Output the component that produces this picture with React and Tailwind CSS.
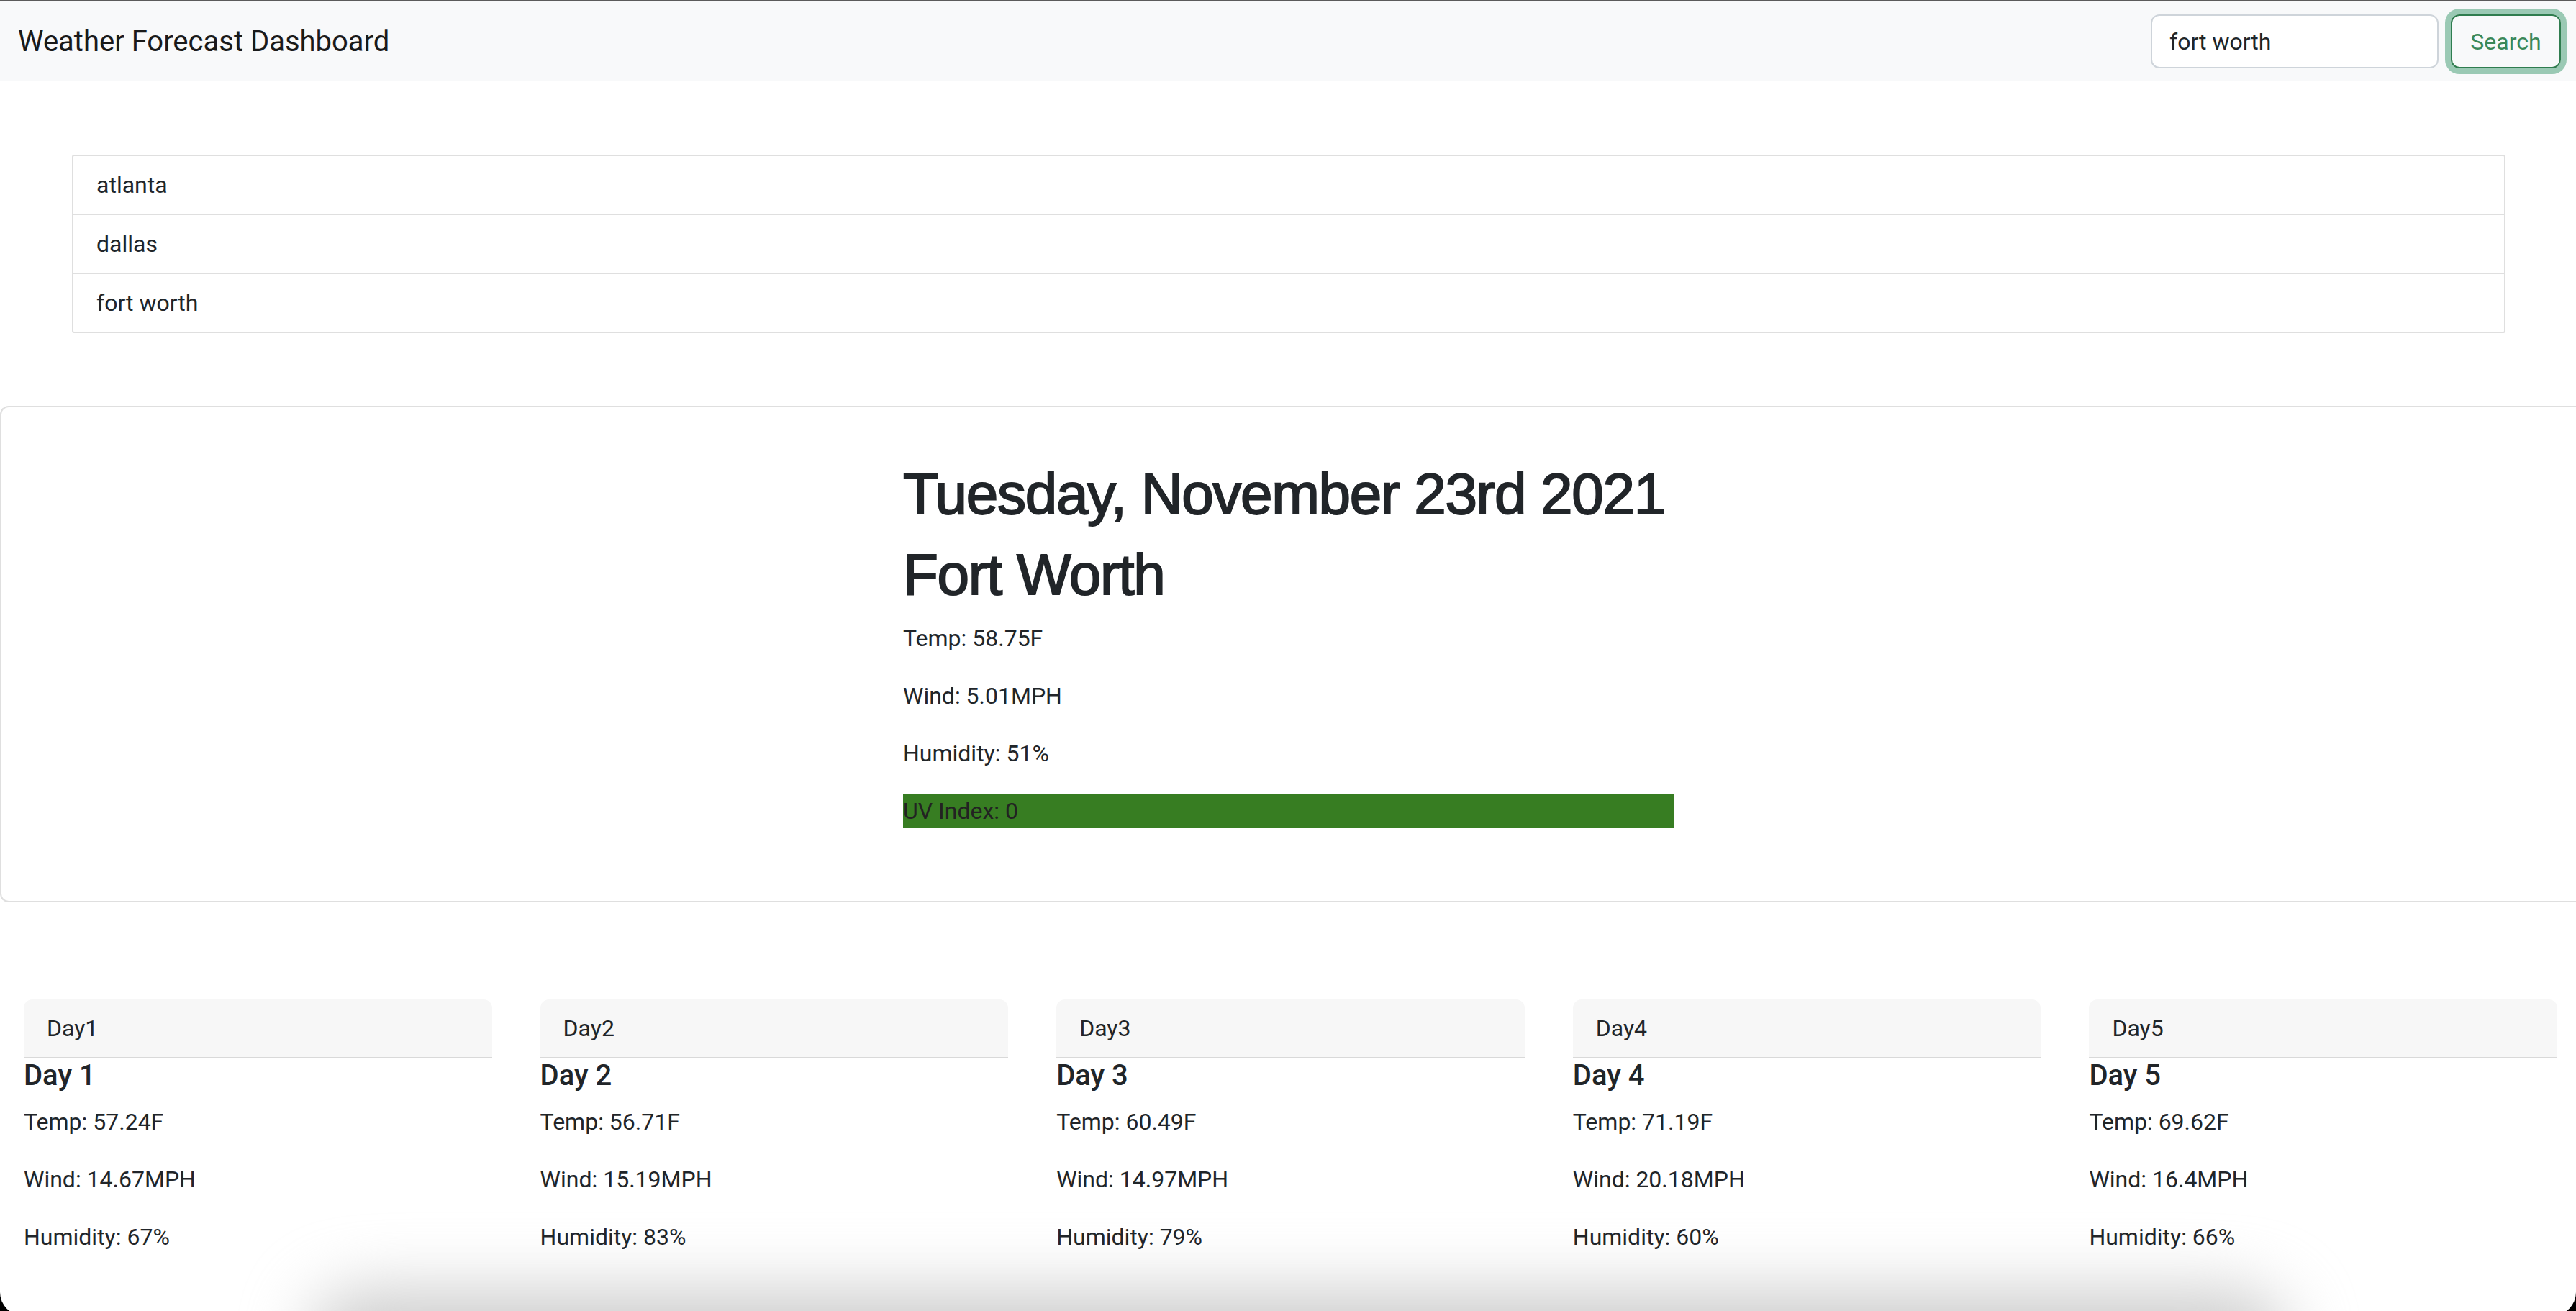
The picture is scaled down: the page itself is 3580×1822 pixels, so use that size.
import React from 'react';

const history = ["atlanta", "dallas", "fort worth"];

const forecast = [
  { label: "Day1", title: "Day 1", temp: "57.24F", wind: "14.67MPH", humidity: "67%" },
  { label: "Day2", title: "Day 2", temp: "56.71F", wind: "15.19MPH", humidity: "83%" },
  { label: "Day3", title: "Day 3", temp: "60.49F", wind: "14.97MPH", humidity: "79%" },
  { label: "Day4", title: "Day 4", temp: "71.19F", wind: "20.18MPH", humidity: "60%" },
  { label: "Day5", title: "Day 5", temp: "69.62F", wind: "16.4MPH", humidity: "66%" },
];

function Navbar() {
  return (
    <nav className="h-[113px] border-t-2 border-[#5b5b5b] bg-[#f8f9fa] flex items-center justify-between pl-[25px] pr-[21px]">
      <span className="text-[40px] leading-[60px] text-[#1a1a1a]">Weather Forecast Dashboard</span>
      <div className="flex items-center gap-[17px]">
        <input
          type="text"
          defaultValue="fort worth"
          className="w-[400px] h-[75px] bg-white border-2 border-[#ced4da] rounded-[12px] px-[24px] text-[32px] text-[#212529] outline-none"
        />
        <button className="w-[153px] h-[75px] border-2 border-[#2f7d4f] rounded-[12px] text-[32px] text-[#3a8858] shadow-[0_0_0_8px_rgba(25,135,84,0.42)]">
          Search
        </button>
      </div>
    </nav>
  );
}

function CurrentWeather() {
  // Arial-width face, thickened a little to read as medium weight
  const heading = "text-[80px] leading-[96px] mb-[16px] whitespace-nowrap tracking-[-1.3px] text-[#212529] font-[family-name:'Liberation_Sans',Arial,sans-serif] [-webkit-text-stroke-width:2px] [-webkit-text-stroke-color:#212529]";
  return (
    <div className="mt-[101px] border-2 border-r-0 border-[#dfdfdf] rounded-l-[12px] pt-[73px] pb-[101px]">
      <div className="mx-auto w-[1072px]">
        <h1 className={heading}>Tuesday, November 23rd 2021</h1>
        <h1 className={heading}>Fort Worth</h1>
        <p className="leading-[48px] mb-[32px]">Temp: 58.75F</p>
        <p className="leading-[48px] mb-[32px]">Wind: 5.01MPH</p>
        <p className="leading-[48px] mb-[32px]">Humidity: 51%</p>
        <p className="leading-[48px] bg-[#377d22] text-[#222]">UV Index: 0</p>
      </div>
    </div>
  );
}

function ForecastCard({ day }) {
  return (
    <div>
      <div className="bg-[#f7f7f7] border-b-2 border-[#d9d9d9] rounded-t-[12px] px-[32px] py-[16px] leading-[48px]">
        {day.label}
      </div>
      <h5 className="text-[40px] leading-[48px] font-medium mb-[16px]">{day.title}</h5>
      <p className="leading-[48px] mb-[32px]">Temp: {day.temp}</p>
      <p className="leading-[48px] mb-[32px]">Wind: {day.wind}</p>
      <p className="leading-[48px]">Humidity: {day.humidity}</p>
    </div>
  );
}

export default function App() {
  return (
    <div className="h-[1822px] overflow-hidden bg-black">
      <div className="relative h-[1828px] overflow-hidden rounded-b-[32px] bg-white text-[32px] text-[#212529] font-[family-name:Roboto,'Liberation_Sans',sans-serif]">
        {/* window shadow at the bottom edge */}
        <div className="absolute left-[430px] right-[400px] bottom-[-115px] h-[150px] rounded-full bg-[#cdcdcd] blur-[45px] pointer-events-none" />

        <div className="relative z-10">
          <Navbar />

          <div className="mt-[102px] ml-[100px] mr-[98px] border-2 border-[#dfdfdf] rounded-[3px]">
            {history.map((city, i) => (
              <div
                key={city}
                className={`px-[32px] py-[16px] leading-[48px] ${i > 0 ? "border-t-2 border-[#dfdfdf]" : ""}`}
              >
                {city}
              </div>
            ))}
          </div>

          <CurrentWeather />

          <div className="mt-[135px] pl-[33px] pr-[26px] grid grid-cols-5 gap-[67px]">
            {forecast.map((day) => (
              <ForecastCard key={day.label} day={day} />
            ))}
          </div>
        </div>
      </div>
    </div>
  );
}
